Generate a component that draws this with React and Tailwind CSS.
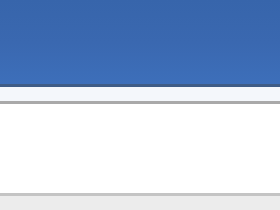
export default function App() {
  return (
    <div className="flex h-[210px] w-[280px] flex-col overflow-hidden bg-white">
      {/* header band */}
      <div className="h-[84px] bg-gradient-to-b from-[#3765ab] via-[#3a68b0] to-[#3d6fba]" />
      <div className="h-[3px] bg-[#3f5c86]" />
      {/* toolbar strip */}
      <div className="h-[14px] bg-[#f4f7fb]" />
      <div className="h-[3px] bg-[#a9a9a9]" />
      {/* content */}
      <div className="flex-1 bg-white" />
      <div className="h-[3px] bg-[#c4c4c4]" />
      <div className="h-[14px] bg-[#ececec]" />
    </div>
  );
}
